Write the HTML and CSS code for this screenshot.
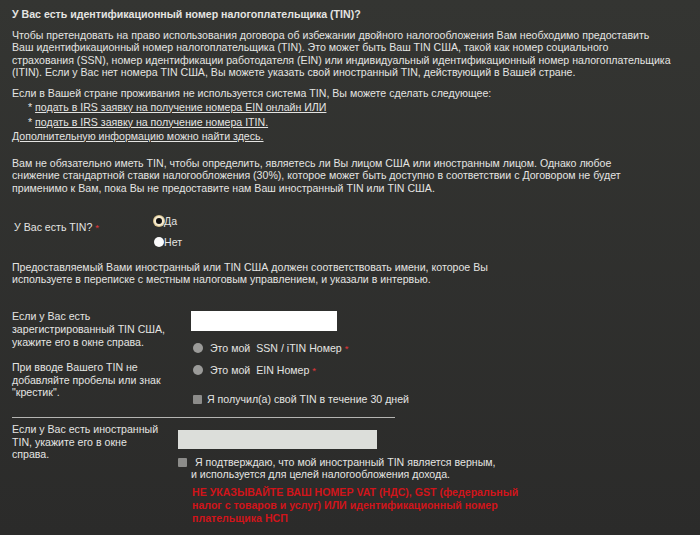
FILE: index.html
```html
<!DOCTYPE html>
<html lang="ru">
<head>
  <meta charset="UTF-8">
  <meta name="viewport" content="width=device-width, initial-scale=1.0">
  <title>TIN</title>
  <link rel="stylesheet" href="styles.css">
</head>
<body>
  <div class="page">
    <h1 class="title">У Вас есть идентификационный номер налогоплательщика (TIN)?</h1>

    <p class="text p1">
      Чтобы претендовать на право использования договора об избежании двойного налогообложения Вам необходимо предоставить<br>
      Ваш идентификационный номер налогоплательщика (TIN). Это может быть Ваш TIN США, такой как номер социального<br>
      страхования (SSN), номер идентификации работодателя (EIN) или индивидуальный идентификационный номер налогоплательщика<br>
      (ITIN). Если у Вас нет номера TIN США, Вы можете указать свой иностранный TIN, действующий в Вашей стране.
    </p>

    <div class="text p2">
      <div class="line">Если в Вашей стране проживания не используется система TIN, Вы можете сделать следующее:</div>
      <div class="bullet">* <a href="#">подать в IRS заявку на получение номера EIN онлайн ИЛИ</a></div>
      <div class="bullet">* <a href="#">подать в IRS заявку на получение номера ITIN.</a></div>
      <div class="line"><a href="#">Дополнительную информацию можно найти здесь.</a></div>
    </div>

    <p class="text p3">
      Вам не обязательно иметь TIN, чтобы определить, являетесь ли Вы лицом США или иностранным лицом. Однако любое<br>
      снижение стандартной ставки налогообложения (30%), которое может быть доступно в соответствии с Договором не будет<br>
      применимо к Вам, пока Вы не предоставите нам Ваш иностранный TIN или TIN США.
    </p>

    <div class="has-tin">
      <div class="has-tin-label">У Вас есть TIN? <span class="req">*</span></div>
      <div class="has-tin-options">
        <div class="opt"><span class="radio radio-on"></span>Да</div>
        <div class="opt"><span class="radio radio-off"></span>Нет</div>
      </div>
    </div>

    <p class="text p4">
      Предоставляемый Вами иностранный или TIN США должен соответствовать имени, которое Вы<br>
      используете в переписке с местным налоговым управлением, и указали в интервью.
    </p>

    <div class="us-tin">
      <div class="side">
        <p>Если у Вас есть<br>зарегистрированный TIN США,<br>укажите его в окне справа.</p>
        <p class="side-note">При вводе Вашего TIN не<br>добавляйте пробелы или знак<br>"крестик".</p>
      </div>
      <div class="fields">
        <div class="field field-white"></div>
        <div class="choices">
          <div class="choice"><span class="radio radio-grey"></span><span>Это мой&nbsp; SSN / iTIN Номер <span class="req">*</span></span></div>
          <div class="choice"><span class="radio radio-grey"></span><span>Это мой&nbsp; EIN Номер <span class="req">*</span></span></div>
        </div>
        <div class="check-row"><span class="box"></span>Я получил(а) свой TIN в течение 30 дней</div>
      </div>
    </div>

    <div class="divider"></div>

    <div class="foreign-tin">
      <div class="side side-narrow">
        <p>Если у Вас есть иностранный<br>TIN, укажите его в окне<br>справа.</p>
      </div>
      <div class="fields">
        <div class="field field-grey"></div>
        <div class="confirm"><span class="box"></span>Я подтверждаю, что мой иностранный TIN является верным,<br>и используется для целей налогообложения дохода.</div>
        <div class="warning">НЕ УКАЗЫВАЙТЕ ВАШ НОМЕР VAT (НДС), GST (федеральный<br>налог с товаров и услуг) ИЛИ идентификационный номер<br>плательщика НСП</div>
      </div>
    </div>
  </div>
</body>
</html>
```

FILE: styles.css
```css
* {
  margin: 0;
  padding: 0;
  box-sizing: border-box;
}

body {
  font-family: "Liberation Sans", Arial, sans-serif;
  font-size: 10.6px;
  color: #e4e4e2;
  background: linear-gradient(#343532, #2b2b2a);
  min-height: 535px;
}

.page {
  padding: 8px 12px 0;
}

.title {
  font-size: 10.6px;
  font-weight: bold;
  line-height: 13px;
}

.text {
  line-height: 12.5px;
  white-space: nowrap;
}

.p1 {
  margin-top: 7.5px;
}

.p2 {
  margin-top: 8px;
}

.p2 .line {
  line-height: 13px;
}

.p2 .bullet {
  line-height: 15px;
  padding-left: 16px;
}

a {
  color: inherit;
  text-decoration: underline;
}

.p3 {
  margin-top: 14px;
}

.has-tin {
  display: flex;
  margin-top: 17px;
}

.has-tin-label {
  width: 142px;
  padding: 10px 0 0 2px;
  line-height: 13px;
}

.req {
  color: #e0363a;
  font-size: 9.5px;
}

.opt {
  display: flex;
  align-items: center;
  height: 20px;
}

.opt + .opt {
  margin-top: 1px;
}

.radio {
  display: inline-block;
  width: 10px;
  height: 10px;
  border-radius: 50%;
  flex: none;
}

.radio-on {
  background: #111;
  border: 2.5px solid #f6ead0;
  box-shadow: 0 0 0 1px #d8c48e;
}

.radio-off {
  background: #fbfbfb;
}

.radio-grey {
  background: #9b9b99;
  margin-right: 7px;
}

.p4 {
  margin-top: 8.5px;
}

.us-tin {
  display: flex;
  margin-top: 23.5px;
}

.side {
  width: 179px;
  line-height: 13px;
  padding-top: 1px;
}

.side-note {
  margin-top: 12px;
  line-height: 12.5px;
}

.fields {
  display: flex;
  flex-direction: column;
}

.field {
  height: 20px;
}

.field-white {
  width: 146px;
  margin-top: 2px;
  background: #fff;
}

.choices {
  margin-top: 6px;
}

.choice {
  display: flex;
  align-items: center;
  height: 22px;
  padding-left: 2px;
}

.check-row {
  display: flex;
  align-items: center;
  height: 22px;
  margin-top: 7px;
  padding-left: 2px;
}

.box {
  display: inline-block;
  width: 9px;
  height: 9px;
  background: #8c8c8a;
  border-radius: 1px;
  margin-right: 5px;
  flex: none;
}

.divider {
  width: 383px;
  height: 1px;
  background: #b5b5b3;
  margin-top: 7px;
}

.foreign-tin {
  display: flex;
}

.side-narrow {
  width: 166px;
  padding-top: 5px;
  line-height: 12.5px;
}

.field-grey {
  width: 199px;
  height: 19px;
  margin-top: 12px;
  background: #dcdeda;
}

.confirm {
  margin-top: 6.5px;
  line-height: 12.5px;
  padding-left: 13px;
  text-indent: -13px;
}

.confirm .box {
  margin-right: 8px;
  vertical-align: -1px;
}

.warning {
  margin-top: 5px;
  padding-left: 14px;
  color: #d0141a;
  font-weight: bold;
  line-height: 13px;
}
```
